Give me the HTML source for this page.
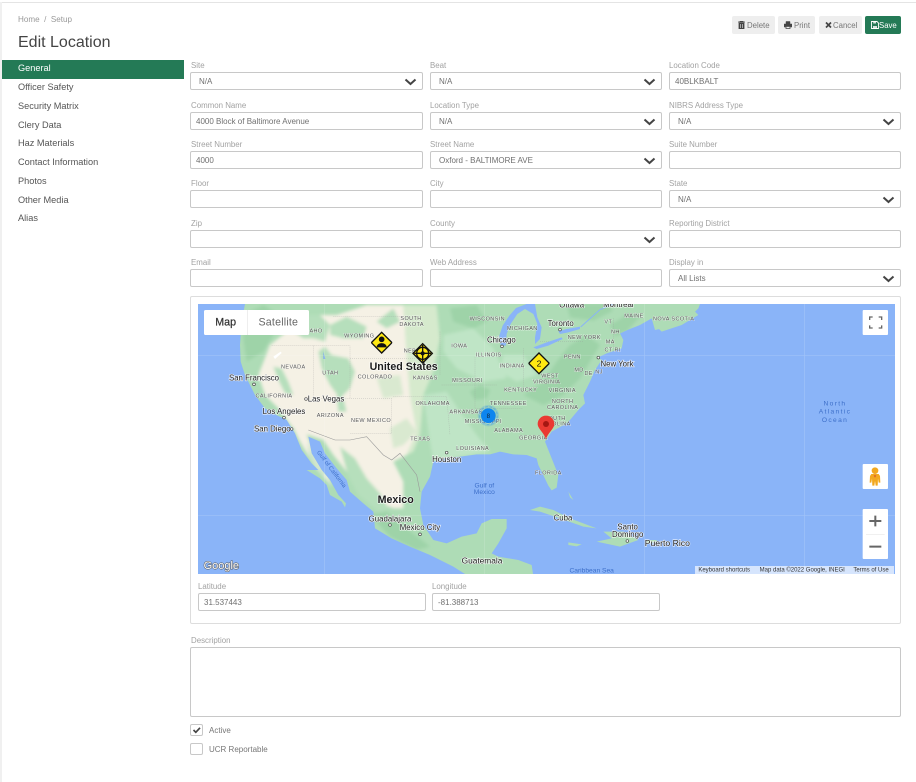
<!DOCTYPE html>
<html><head><meta charset="utf-8"><title>Edit Location</title>
<style>
*{box-sizing:border-box}
html,body{margin:0;padding:0;background:#fff;width:916px;height:782px;overflow:hidden;font-family:"Liberation Sans",sans-serif}
.a{position:absolute;white-space:nowrap}
.lb{position:absolute;font-size:7.9px;line-height:10px;color:#a2a2a2;white-space:nowrap;margin-top:1px}
.in{position:absolute;height:18px;border:1px solid #c8c8c8;border-radius:2px;background:#fff;font-size:8px;line-height:18px;color:#707070;padding-left:5px;white-space:nowrap}
.in.s{padding-left:8px}
.in svg{position:absolute;right:5px;top:5px}
.nav{position:absolute;left:18px;font-size:9.200px;line-height:12px;color:#555;white-space:nowrap}
.btn{position:absolute;top:16px;height:18px;background:#eee;border-radius:2px;font-size:7.800px;line-height:18px;color:#777;white-space:nowrap}
.btn svg{position:absolute;left:6px;top:5px}
.btn span{position:absolute;top:.5px}
.chk{position:absolute;left:190px;width:13px;height:12px;border:1px solid #c8c8c8;border-radius:2px;background:#fff}
</style></head><body>
<div class="a" style="left:0;top:2px;width:916px;height:1px;background:#e4e4e4"></div>
<div class="a" style="left:0;top:2px;width:2px;height:780px;background:#f0f0f0"></div>

<div class="a" style="left:18px;top:15px;font-size:8.100px;line-height:10px;color:#999">Home&nbsp; /&nbsp; Setup</div>
<div class="a" style="left:18px;top:33px;font-size:16px;line-height:20px;color:#444">Edit Location</div>

<div class="a" style="left:2px;top:60px;width:182px;height:19px;background:#247a56"></div>
<div class="nav" style="top:62px;color:#fff">General</div>
<div class="nav" style="top:81px">Officer Safety</div>
<div class="nav" style="top:100px">Security Matrix</div>
<div class="nav" style="top:119px">Clery Data</div>
<div class="nav" style="top:137px">Haz Materials</div>
<div class="nav" style="top:156px">Contact Information</div>
<div class="nav" style="top:175px">Photos</div>
<div class="nav" style="top:194px">Other Media</div>
<div class="nav" style="top:212px">Alias</div>

<div class="btn" style="left:732px;width:43px"><svg width="7" height="8" viewBox="0 0 7 8"><path d="M0 1h7M2 1V0h3v1M1 2h5v6H1z" fill="#444" stroke="#444" stroke-width=".8"/><path d="M2.500 3v4M4.500 3v4" stroke="#eee" stroke-width=".6"/></svg><span style="left:15px">Delete</span></div>
<div class="btn" style="left:778px;width:37px"><svg width="8" height="8" viewBox="0 0 8 8"><path d="M2 3V.5h4V3M0 3h8v3H6.500V5h-5v1H0z" fill="#444" stroke="#444" stroke-width=".5"/><path d="M2 5.500h4v2H2z" fill="none" stroke="#444" stroke-width=".8"/></svg><span style="left:16px">Print</span></div>
<div class="btn" style="left:819px;width:43px"><svg width="7" height="8" viewBox="0 0 7 8"><path d="M1 1.500l5 5M6 1.500l-5 5" stroke="#444" stroke-width="1.700"/></svg><span style="left:14px">Cancel</span></div>
<div class="btn" style="left:865px;width:36px;background:#247a56;color:#fff"><svg width="8" height="8" viewBox="0 0 8 8"><path d="M.5.500h5.500l1.500 1.500v5.500h-7z" fill="none" stroke="#fff" stroke-width=".9"/><path d="M2.200 .5h2.800v2H2.200zM2 5h4v2.500H2z" fill="#fff" opacity=".8"/></svg><span style="left:14px">Save</span></div>

<div class="lb" style="left:191px;top:60px">Site</div>
<div class="lb" style="left:430px;top:60px">Beat</div>
<div class="lb" style="left:669px;top:60px">Location Code</div>
<div class="in s" style="left:190px;top:72px;width:233px">N/A<svg width="13" height="8" viewBox="0 0 13 8"><path d="M1.500 1.500l5 4.500 5-4.500" fill="none" stroke="#444" stroke-width="2"/></svg></div>
<div class="in s" style="left:430px;top:72px;width:232px">N/A<svg width="13" height="8" viewBox="0 0 13 8"><path d="M1.500 1.500l5 4.500 5-4.500" fill="none" stroke="#444" stroke-width="2"/></svg></div>
<div class="in" style="left:669px;top:72px;width:232px">40BLKBALT</div>

<div class="lb" style="left:191px;top:100px">Common Name</div>
<div class="lb" style="left:430px;top:100px">Location Type</div>
<div class="lb" style="left:669px;top:100px">NIBRS Address Type</div>
<div class="in" style="left:190px;top:112px;width:233px">4000 Block of Baltimore Avenue</div>
<div class="in s" style="left:430px;top:112px;width:232px">N/A<svg width="13" height="8" viewBox="0 0 13 8"><path d="M1.500 1.500l5 4.500 5-4.500" fill="none" stroke="#444" stroke-width="2"/></svg></div>
<div class="in s" style="left:669px;top:112px;width:232px">N/A<svg width="13" height="8" viewBox="0 0 13 8"><path d="M1.500 1.500l5 4.500 5-4.500" fill="none" stroke="#444" stroke-width="2"/></svg></div>

<div class="lb" style="left:191px;top:139px">Street Number</div>
<div class="lb" style="left:430px;top:139px">Street Name</div>
<div class="lb" style="left:669px;top:139px">Suite Number</div>
<div class="in" style="left:190px;top:151px;width:233px">4000</div>
<div class="in s" style="left:430px;top:151px;width:232px">Oxford - BALTIMORE AVE<svg width="13" height="8" viewBox="0 0 13 8"><path d="M1.500 1.500l5 4.500 5-4.500" fill="none" stroke="#444" stroke-width="2"/></svg></div>
<div class="in" style="left:669px;top:151px;width:232px"></div>

<div class="lb" style="left:191px;top:178px">Floor</div>
<div class="lb" style="left:430px;top:178px">City</div>
<div class="lb" style="left:669px;top:178px">State</div>
<div class="in" style="left:190px;top:190px;width:233px"></div>
<div class="in" style="left:430px;top:190px;width:232px"></div>
<div class="in s" style="left:669px;top:190px;width:232px">N/A<svg width="13" height="8" viewBox="0 0 13 8"><path d="M1.500 1.500l5 4.500 5-4.500" fill="none" stroke="#444" stroke-width="2"/></svg></div>

<div class="lb" style="left:191px;top:218px">Zip</div>
<div class="lb" style="left:430px;top:218px">County</div>
<div class="lb" style="left:669px;top:218px">Reporting District</div>
<div class="in" style="left:190px;top:230px;width:233px"></div>
<div class="in s" style="left:430px;top:230px;width:232px"><svg width="13" height="8" viewBox="0 0 13 8"><path d="M1.500 1.500l5 4.500 5-4.500" fill="none" stroke="#444" stroke-width="2"/></svg></div>
<div class="in" style="left:669px;top:230px;width:232px"></div>

<div class="lb" style="left:191px;top:257px">Email</div>
<div class="lb" style="left:430px;top:257px">Web Address</div>
<div class="lb" style="left:669px;top:257px">Display in</div>
<div class="in" style="left:190px;top:269px;width:233px"></div>
<div class="in" style="left:430px;top:269px;width:232px"></div>
<div class="in s" style="left:669px;top:269px;width:232px">All Lists<svg width="13" height="8" viewBox="0 0 13 8"><path d="M1.500 1.500l5 4.500 5-4.500" fill="none" stroke="#444" stroke-width="2"/></svg></div>

<div class="a" style="left:190px;top:296px;width:711px;height:328px;border:1px solid #ddd;border-radius:2px"></div>

<svg class="a" style="left:198px;top:304px;filter:blur(.35px)" width="697" height="270" viewBox="24 27 2091 810" font-family="'Liberation Sans',sans-serif">
<defs>
<clipPath id="landclip"><path d="M165 27L155 80 150 150 152 200 165 240 180 270 195 300 225 340 262 362 285 372 290 375 315 415 335 465 365 505 385 525 350 525 390 550 410 570 420 600 455 620 465 637 468 625 445 600 420 555 395 525 365 475 355 425 390 440 405 475 440 520 470 555 480 590 520 625 550 650 555 700 605 730 660 755 720 780 790 815 825 837 1029 837 1025 810 985 795 925 785 905 775 925 745 950 700 950 672 905 672 875 685 860 715 815 725 770 745 730 735 700 690 690 640 695 590 720 545 730 500 770 488 810 485 860 478 900 478 930 470 970 478 1010 480 1040 490 1045 510 1062 545 1075 572 1085 586 1100 578 1105 540 1085 490 1065 440 1085 410 1130 385 1140 375 1165 345 1185 325 1180 300 1200 260 1215 225 1235 195 1225 187 1250 175 1295 160 1300 135 1290 115 1312 105 1350 90 1385 70 1395 105 1440 95 1490 75 1525 40 1530 27Z"/></clipPath>
<filter id="soft" x="-5%" y="-5%" width="110%" height="110%"><feGaussianBlur stdDeviation="5"/></filter>
</defs>
<rect x="24" y="27" width="2091" height="810" fill="#8ab4f8"/>
<!-- main land -->
<rect x="24" y="27" width="2091" height="810" fill="#aedcb6" clip-path="url(#landclip)"/>
<g clip-path="url(#landclip)"><g filter="url(#soft)">
<path fill="#bfe5c6" d="M700 300L770 290 810 350 860 420 900 470 810 485 770 488 730 500 720 440Z"/>
<path fill="#bfe5c6" d="M760 120l90-20 60 60 40 90-70 10-80-40-40-50Z"/>
<path fill="#bfe5c6" d="M940 180l60 0 40 60-60 20-50-30Z"/>
<g fill="#9ed3a8">
<path d="M1000 300L1060 260 1100 200 1140 150 1190 120 1230 150 1200 200 1170 250 1120 300 1060 330Z"/>
<path d="M840 290l30-20 30 15-10 25-35 5Z"/>
<path d="M1260 90l50-30 40 5-40 45-35 15Z"/>
<path d="M540 660l50-10 60 50 70 55-40 10-80-40Z"/>
<path d="M160 60l60-30 50 30-20 60-30 50-50 30-10-70Z"/>
<path d="M1130 27h120l20 20-60 30-70-10Z"/>
<path d="M780 40l80-10 30 50-40 20-60-20Z"/>
</g>
<path fill="#f5f1e5" d="M240 150L290 110 300 60 440 60 530 30 640 30 650 180 660 300 680 410 650 480 610 500 640 560 640 640 610 640 560 620 510 560 470 530 430 480 400 435 355 420 305 395 270 345 225 300 205 240Z"/>
<path fill="#f5f1e5" d="M300 380L330 440 345 465 380 520 410 555 425 575 410 530 375 480 355 430 340 395Z"/>
<path fill="#d6eacd" d="M640 30L740 30 750 130 730 230 700 300 690 420 670 470 650 480 680 410 660 300 650 180Z"/>
<g fill="#b6dfbc">
<path d="M385 170l20-15 20 25 50 10 20 40-15 50-30 30-30-40-25-50Z"/>
<path d="M250 215l25 5 20 40 15 40-25-5-20-40Z"/>
<path d="M420 90l50-25 60 30-10 35-60 0-40-10Z"/>
<path d="M330 60h60l30 30-15 50-35-10-30 0-30-20Z"/>
<path d="M450 455l45 35 35 60 40 45 25 45-30 10-60-50-30-55Z"/>
<path d="M440 300l20 10 10 40-25 0Z"/>
<path d="M560 80l50-40 20 40-40 20Z"/>
<path d="M350 440l25 50 35 50-10 0-40-55Z" opacity=".8"/>
</g>
<g fill="#d9e9d0"><path d="M560 250l70-10 10 60-60 10Z"/><path d="M600 400l50-30 30 40-40 40-30 10Z"/></g>
</g></g>
<path d="M400 170l6 22-6 0Z" fill="#7ea9ee"/><path d="M250 185l22-15 3 4-20 18Z" fill="#fff"/>
<!-- state borders -->
<g fill="none" stroke="#999" stroke-width="1.300" stroke-dasharray="3 3" opacity=".65">
<path d="M245 152H480V310H605V415H480M370 152V310H480M430 65H640M480 190H680M610 305H770L780 420M750 110V240M755 270H920M855 185V340H1000M1000 160V290M1050 140H1180M1270 70V170"/>
</g>
<path d="M355 405L435 435H480L530 425 580 480 605 495 630 475 680 540 690 590" fill="none" stroke="#999" stroke-width="1.800"/>
<!-- lakes -->
<g fill="#8ab4f8">
<path d="M932 152L928 122 938 92 958 62 978 39 1010 27 1035 27 1042 67 1055 97 1050 132 1035 147 1035 127 1042 87 1030 57 1005 42 982 57 962 87 950 117 948 152Z"/>
<path d="M1030 157L1070 142 1115 127 1118 132 1075 152 1040 162Z"/>
<path d="M1105 109L1130 102 1170 95 1170 102 1135 112 1110 117Z"/>
</g>
<path d="M1172 96L1230 44 1270 27" fill="none" stroke="#8ab4f8" stroke-width="3"/>
<!-- islands -->
<g fill="#aedcb6">
<path d="M1050 635L1090 645 1140 670 1220 700 1180 695 1110 670 1050 650 1020 645Z"/>
<path d="M1240 710L1300 710 1345 735 1290 755 1220 740 1265 730Z"/>
<path d="M1135 742l40 6-15 6-25-4Z"/>
<path d="M1370 735h30v8h-30Z"/>
<path d="M1135 590l15 25-10-8Z"/>
<path d="M1405 100l60-20 50-30 10 10-50 30-60 20Z"/>
</g>
<!-- grid -->
<g stroke="#fff" stroke-opacity=".2" stroke-width="2">
<path d="M403 27V837M883 27V837M1363 27V837M1843 27V837M24 181H2115M24 661H2115"/>
</g>
<!-- state labels -->
<g font-size="16.500" fill="#555" text-anchor="middle" letter-spacing="1.200" stroke="#fff" stroke-width="3" stroke-opacity=".55" paint-order="stroke">
<text x="663" y="75">SOUTH</text><text x="665" y="93">DAKOTA</text>
<text x="892" y="77">WISCONSIN</text><text x="997" y="105">MICHIGAN</text>
<text x="508" y="128">WYOMING</text><text x="660" y="172">NEB</text>
<text x="808" y="158">IOWA</text><text x="896" y="185">ILLINOIS</text><text x="966" y="218">INDIANA</text>
<text x="310" y="220">NEVADA</text><text x="421" y="239">UTAH</text><text x="555" y="250">COLORADO</text>
<text x="706" y="254">KANSAS</text><text x="832" y="261">MISSOURI</text><text x="992" y="290">KENTUCKY</text>
<text x="252" y="308">CALIFORNIA</text><text x="421" y="366">ARIZONA</text><text x="543" y="381">NEW MEXICO</text>
<text x="728" y="330">OKLAHOMA</text><text x="955" y="330">TENNESSEE</text><text x="828" y="356">ARKANSAS</text>
<text x="880" y="384">MISSISSIPPI</text><text x="956" y="411">ALABAMA</text><text x="1030" y="434">GEORGIA</text>
<text x="691" y="437">TEXAS</text><text x="848" y="465">LOUISIANA</text><text x="1075" y="539">FLORIDA</text>
<text x="1332" y="68">MAINE</text><text x="1451" y="77">NOVA SCOTIA</text><text x="1183" y="132">NEW YORK</text>
<text x="1255" y="86">VT</text><text x="1276" y="116">NH</text><text x="1261" y="146">MA</text><text x="1268" y="169">CT RI</text>
<text x="1147" y="190">PENN</text><text x="1167" y="229">MD</text><text x="1196" y="240">DE</text><text x="1227" y="236">NJ</text>
<text x="1080" y="248">WEST</text><text x="1070" y="265">VIRGINIA</text><text x="1117" y="291">VIRGINIA</text>
<text x="1118" y="324">NORTH</text><text x="1118" y="342">CAROLINA</text><text x="1095" y="375">SOUTH</text><text x="1095" y="392">CAROLINA</text>
<text x="378" y="113">AHO</text>
</g>
<!-- water labels -->
<g fill="#3d6fc9" font-size="20" text-anchor="middle">
<text x="883" y="578">Gulf of</text><text x="883" y="597">Mexico</text>
<text x="1935" y="332" letter-spacing="4">North</text><text x="1935" y="356" letter-spacing="4">Atlantic</text><text x="1935" y="381" letter-spacing="4">Ocean</text>
<text x="1205" y="833">Caribbean Sea</text>
<text transform="translate(380 472) rotate(53)" font-size="18" text-anchor="start" x="0" y="0">Gulf of California</text>
</g>
<!-- city labels -->
<g font-size="23.500" fill="#222" text-anchor="middle" stroke="#fff" stroke-width="4" stroke-opacity=".8" paint-order="stroke">
<text x="192" y="257">San Francisco</text><text x="408" y="319">Las Vegas</text><text x="282" y="357">Los Angeles</text><text x="247" y="409">San Diego</text>
<text x="934" y="143">Chicago</text><text x="770" y="501">Houston</text><text x="1112" y="93">Toronto</text><text x="1145" y="38">Ottawa</text><text x="1285" y="36">Montreal</text>
<text x="1281" y="214">New York</text><text x="1119" y="677">Cuba</text><text x="1313" y="703">Santo</text><text x="1313" y="726">Domingo</text>
<text x="1432" y="753" font-size="26">Puerto Rico</text><text x="600" y="680">Guadalajara</text><text x="690" y="705">Mexico City</text><text x="876" y="805" font-size="25">Guatemala</text>
</g>
<g font-weight="bold" fill="#1c1c1c" text-anchor="middle" stroke="#fff" stroke-width="4" stroke-opacity=".8" paint-order="stroke">
<text x="641" y="225" font-size="32">United States</text>
<text x="617" y="624" font-size="32">Mexico</text>
</g>
<g fill="#fff" stroke="#444" stroke-width="2">
<circle cx="192" cy="268" r="4"/><circle cx="348" cy="312" r="4"/><circle cx="282" cy="368" r="4"/><circle cx="305" cy="402" r="4"/><circle cx="936" cy="154" r="4"/><circle cx="770" cy="473" r="4"/><circle cx="1110" cy="104" r="4"/><circle cx="1225" cy="188" r="4"/><circle cx="600" cy="690" r="4"/><circle cx="690" cy="718" r="4"/><circle cx="1312" cy="738" r="4"/>
</g>
<text x="94" y="822" font-size="33" fill="#fff" stroke="#555" stroke-width="3" paint-order="stroke" text-anchor="middle">Google</text>

<!-- attribution -->
<rect x="1515" y="813" width="597" height="24" fill="#fff" fill-opacity=".65"/>
<g font-size="18" fill="#333"><text x="1525" y="830">Keyboard shortcuts</text><text x="1709" y="830">Map data ©2022 Google, INEGI</text><text x="1990" y="830">Terms of Use</text></g>

<!-- controls -->
<rect x="42" y="45" width="315" height="75" rx="5" fill="#fff"/>
<path d="M172 45v75" stroke="#e6e6e6" stroke-width="2"/>
<text x="107" y="92" font-size="32" fill="#333" stroke="#333" stroke-width=".7" text-anchor="middle">Map</text>
<text x="265" y="92" font-size="32" fill="#666" text-anchor="middle" letter-spacing=".6">Satellite</text>
<rect x="2018" y="45" width="76" height="75" rx="3" fill="#fff"/>
<path d="M2039 75V66H2048M2066 66H2075V75M2075 91V99H2066M2048 99H2039V91" fill="none" stroke="#666" stroke-width="4"/>
<rect x="2018" y="507" width="76" height="75" rx="3" fill="#fff"/>
<circle cx="2055" cy="527" r="10" fill="#f2a81f"/>
<path d="M2044 537h22l4 6 1 20h-5l-2-12-1 21h-6l-2-14-2 14h-6l-1-21-2 12h-5l1-20Z" fill="#f2a81f"/>
<path d="M2052 540l3 6 3-6" fill="none" stroke="#d9502a" stroke-width="2"/>
<rect x="2018" y="642" width="76" height="150" rx="3" fill="#fff"/>
<path d="M2028 718h56" stroke="#e6e6e6" stroke-width="2"/>
<path d="M2056 662v32M2038 678h36M2038 755h36" stroke="#666" stroke-width="6" fill="none"/>

<!-- markers -->
<g>
<path d="M575 112l29 29a3 3 0 0 1 0 4l-29 29-29-29a3 3 0 0 1 0-4Z" fill="#ffe812" stroke="#111" stroke-width="4"/>
<circle cx="575" cy="133" r="8.500" fill="#111"/><path d="M560 157c0-17 30-17 30 0Z" fill="#111"/>
<path d="M698 146l29 29-29 29-29-29Z" fill="#ffe812" stroke="#111" stroke-width="4"/>
<circle cx="698" cy="175" r="18" fill="none" stroke="#111" stroke-width="4"/><circle cx="698" cy="175" r="6" fill="#111"/>
<path d="M698 150v50M673 175h50" stroke="#111" stroke-width="4"/>
<path d="M1047 174l29 29a3 3 0 0 1 0 4l-29 29-29-29a3 3 0 0 1 0-4Z" fill="#ffe812" stroke="#111" stroke-width="4"/>
<text x="1047" y="214" font-size="26" fill="#111" text-anchor="middle">2</text>
<circle cx="895" cy="362" r="32" fill="#1a87f0" opacity=".18"/><circle cx="895" cy="362" r="27" fill="none" stroke="#1a87f0" stroke-opacity=".35" stroke-width="3" stroke-dasharray="8 5"/>
<circle cx="895" cy="362" r="22" fill="#0e85ee"/><text x="895" y="369" font-size="19" fill="#123" text-anchor="middle">8</text>
<path d="M1068 433c-6-20-25-32-25-46a25 25 0 0 1 50 0c0 14-19 26-25 46Z" fill="#ea3a32"/><circle cx="1068" cy="387" r="9" fill="#a51712"/>
</g>
</svg>

<div class="lb" style="left:198px;top:581px">Latitude</div>
<div class="lb" style="left:432px;top:581px">Longitude</div>
<div class="in" style="left:198px;top:593px;width:228px">31.537443</div>
<div class="in" style="left:432px;top:593px;width:228px">-81.388713</div>

<div class="lb" style="left:191px;top:635px">Description</div>
<div class="a" style="left:190px;top:647px;width:711px;height:70px;border:1px solid #c8c8c8;border-radius:2px"></div>

<div class="chk" style="top:724px"><svg width="11" height="10" viewBox="0 0 11 10" style="position:absolute;left:0;top:0"><path d="M2.500 5l2.300 2.300L9 2.800" fill="none" stroke="#444" stroke-width="1.700"/></svg></div>
<div class="a" style="left:209px;top:726px;font-size:8px;line-height:10px;color:#777">Active</div>
<div class="chk" style="top:743px"></div>
<div class="a" style="left:209px;top:745px;font-size:8px;line-height:10px;color:#777">UCR Reportable</div>
</body></html>
